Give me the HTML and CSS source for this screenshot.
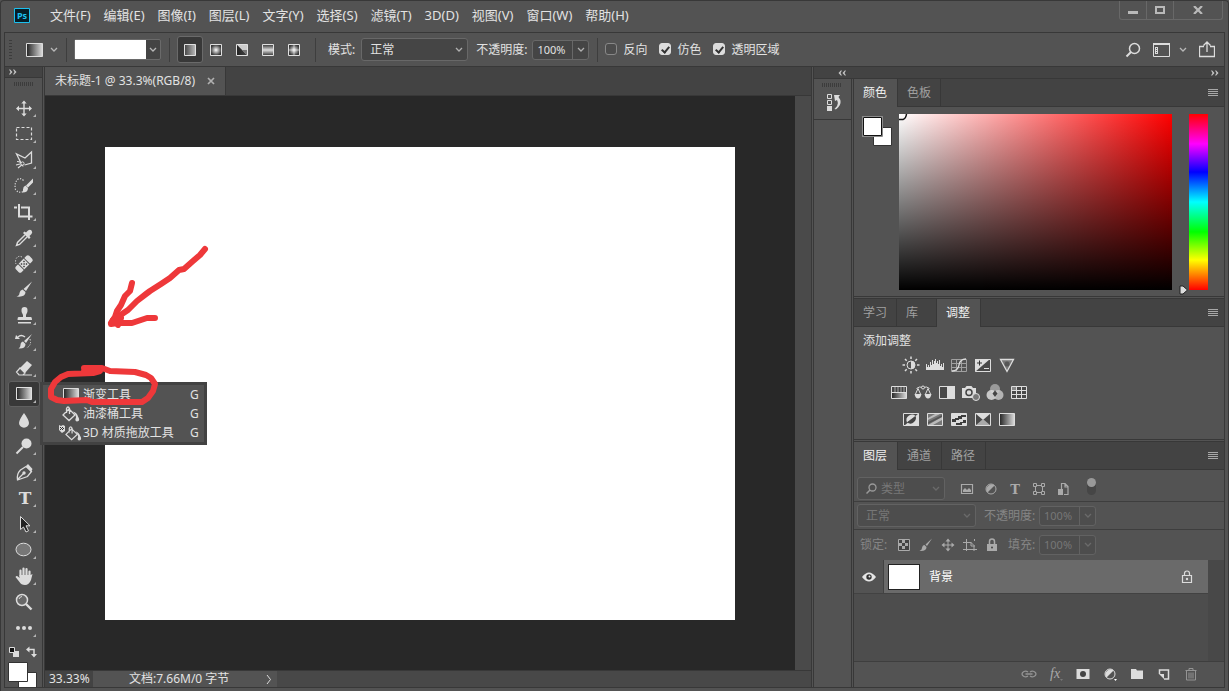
FILE: index.html
```html
<!DOCTYPE html>
<html lang="zh-CN">
<head>
<meta charset="utf-8">
<title>未标题-1 @ 33.3%(RGB/8)</title>
<link rel="stylesheet" href="styles.css">
</head>
<body>
<svg class="defs" width="0" height="0" aria-hidden="true">
  <defs>
    <linearGradient id="g-dark"><stop offset="0" stop-color="#222"/><stop offset="1" stop-color="#ddd"/></linearGradient>
    <linearGradient id="g-soft"><stop offset="0" stop-color="#444"/><stop offset="1" stop-color="#bbb"/></linearGradient>
    <radialGradient id="g-radial"><stop offset="0" stop-color="#fff"/><stop offset="1" stop-color="#3a3a3a"/></radialGradient>
    <linearGradient id="g-reflect" x2="0" y2="1"><stop offset="0" stop-color="#333"/><stop offset=".5" stop-color="#ddd"/><stop offset="1" stop-color="#333"/></linearGradient>
    <symbol id="chev" viewBox="0 0 8 6"><path d="M1 1l3 3 3-3" fill="none" stroke="currentColor" stroke-width="1.3"/></symbol>
    <symbol id="corner" viewBox="0 0 32 26"><path d="M28 19v3h-3z" fill="#b4b4b4"/></symbol>
    <symbol id="ff" viewBox="0 0 8 6"><path d="M0 .5h1.200l2.300 2.500-2.300 2.500H0L1.500 3zM4 .5h1.200L7.500 3 5.200 5.500H4L5.500 3z" fill="currentColor"/></symbol>
    <symbol id="bars" viewBox="0 0 10 8"><path d="M0 .5h10M0 2.500h10M0 4.500h10M0 6.500h10" stroke="#a8a8a8"/></symbol>
    <symbol id="bucket" viewBox="0 0 18 16"><path d="M1 9l6-6 6 6-6 5.500zM4.500 7V2.500Q6-.5 7.500 2.500V8" fill="none" stroke="#dcdcdc" stroke-width="1.300"/><path d="M11 5.500q4 1 5 5 2 3 .5 4.500-2 1-3-.5-.5-1 .5-3 0-3-3-6z" fill="#dcdcdc"/></symbol>
  </defs>
</svg>
<div class="app">
  <header class="menubar">
    <svg class="logo" viewBox="0 0 16 15"><path d="M.5.5h15v14H.5z" fill="#061e27" stroke="#1cc0ef"/><text x="3" y="11" font-size="9" fill="#1cc0ef">Ps</text></svg>
    <nav class="menus">
      <button>文件(F)</button><button>编辑(E)</button><button>图像(I)</button><button>图层(L)</button><button>文字(Y)</button><button>选择(S)</button><button>滤镜(T)</button><button>3D(D)</button><button>视图(V)</button><button>窗口(W)</button><button>帮助(H)</button>
    </nav>
    <div class="winbtns">
      <button aria-label="最小化"><svg width="12" height="10"><path d="M1 6h10v3H1z" fill="#b9b9b9"/></svg></button>
      <button aria-label="最大化"><svg width="10" height="8"><path d="M1 1h8v6H1z" fill="none" stroke="#b9b9b9" stroke-width="2"/></svg></button>
      <button class="wide" aria-label="关闭"><svg width="10" height="8"><path d="M1 0l8 8M9 0L1 8" stroke="#b9b9b9" stroke-width="2.200"/></svg></button>
    </div>
  </header>

  <div class="options">
    <span class="grip-v"></span>
    <button class="preset" aria-label="工具预设"><svg width="17" height="14"><path d="M.5.5h16v13H.5z" fill="url(#g-dark)" stroke="#dcdcdc"/></svg><svg class="chev" width="8" height="6"><use href="#chev"/></svg></button>
    <span class="sep"></span>
    <div class="gradpick"><span class="gradfill"></span><button aria-label="渐变列表"><svg width="8" height="6"><use href="#chev"/></svg></button></div>
    <span class="sep"></span>
    <div class="gradtypes">
      <button class="on" aria-label="线性渐变"><svg width="12" height="12"><path d="M.5.5h11v11H.5z" fill="url(#g-soft)" stroke="#e0e0e0"/></svg></button>
      <button aria-label="径向渐变"><svg width="12" height="12"><path d="M.5.5h11v11H.5z" fill="url(#g-radial)" stroke="#e0e0e0"/></svg></button>
      <button aria-label="角度渐变"><svg width="12" height="12"><path d="M.5.5h11v11H.5z" fill="url(#g-dark)"/><path d="M.5.5h11v11L6 6z" fill="#ccc"/><path d="M0 0l6 6 5.500 5.500H0z" fill="#222" opacity=".8"/><path d="M6 6l5.500 5.500V6z" fill="#777"/><path d="M.5.5h11v11H.5z" fill="none" stroke="#e0e0e0"/></svg></button>
      <button aria-label="对称渐变"><svg width="12" height="12"><path d="M.5.5h11v11H.5z" fill="url(#g-reflect)" stroke="#e0e0e0"/></svg></button>
      <button aria-label="菱形渐变"><svg width="12" height="12"><path d="M.5.5h11v11H.5z" fill="url(#g-radial)" stroke="#e0e0e0"/><path d="M6 1v10M1 6h10" stroke="#eee" opacity=".6"/></svg></button>
    </div>
    <span class="sep"></span>
    <label class="field-label" for="mode">模式:</label>
    <span class="select mode"><select id="mode"><option>正常</option></select><svg width="8" height="6"><use href="#chev"/></svg></span>
    <label class="field-label" for="opacity">不透明度:</label>
    <span class="num"><input id="opacity" type="text" value="100%"><button aria-label="不透明度滑块"><svg width="8" height="6"><use href="#chev"/></svg></button></span>
    <span class="sep"></span>
    <label class="check"><input type="checkbox">反向</label>
    <label class="check"><input type="checkbox" checked>仿色</label>
    <label class="check"><input type="checkbox" checked>透明区域</label>
    <div class="opt-right">
      <button aria-label="搜索"><svg width="16" height="16"><circle cx="9.500" cy="6.500" r="5" fill="none" stroke="#dcdcdc" stroke-width="1.500"/><path d="M6 10l-4.500 4.500" stroke="#dcdcdc" stroke-width="2"/></svg></button>
      <button class="layout" aria-label="工作区"><svg width="17" height="14"><path d="M.5 1h16v12.500H.5z" fill="none" stroke="#dcdcdc"/><path d="M0 1h17" stroke="#dcdcdc" stroke-width="2"/><path d="M2 4h3v7H2z" fill="#dcdcdc"/><path d="M3 5.500h1M3 7.500h1M3 9.500h1" stroke="#535353"/></svg><svg width="8" height="6"><use href="#chev"/></svg></button>
      <button aria-label="共享"><svg width="16" height="17"><path d="M5 5.500H.5v10h15v-10H11M8 11V1M4.500 4.500L8 1l3.500 3.500" fill="none" stroke="#dcdcdc" stroke-width="1.300"/></svg></button>
    </div>
  </div>

  <main class="work">
    <aside class="toolcol">
      <div class="colhead"><svg width="8" height="6"><use href="#ff"/></svg></div>
      <div class="toolbox">
        <span class="grip-h"></span>
        <button class="tool" aria-label="移动工具"><svg viewBox="0 0 32 26"><path d="M16 7v13M9.500 13.500h13" stroke="#dcdcdc" stroke-width="1.400"/><path d="M16 5.500l2.700 3h-5.400zM16 21.500l2.700-3h-5.400zM8 13.500l3-2.700v5.400zM24 13.500l-3-2.700v5.400z" fill="#dcdcdc"/><use href="#corner"/></svg></button>
        <button class="tool" aria-label="矩形选框工具"><svg viewBox="0 0 32 26"><path d="M8.500 6.500h15v12h-15z" fill="none" stroke="#dcdcdc" stroke-width="1.200" stroke-dasharray="3 2"/><use href="#corner"/></svg></button>
        <button class="tool" aria-label="多边形套索工具"><svg viewBox="0 0 32 26"><path d="M13 16L8.500 7l8.500 4 6.500-6v11l-7 2" fill="none" stroke="#dcdcdc" stroke-width="1.300"/><path d="M9 14.500q5 0 6 5m-7-1.500l6-1.500m-4 4.500l5-4" fill="none" stroke="#dcdcdc" stroke-width="1.200"/><circle cx="14.500" cy="16.500" r="1.600" fill="#535353" stroke="#dcdcdc"/><use href="#corner"/></svg></button>
        <button class="tool" aria-label="快速选择工具"><svg viewBox="0 0 32 26"><path d="M15.500 7.500q-3-3-6-1-3.500 4-2 10 3 4 7 2" fill="none" stroke="#dcdcdc" stroke-width="1.200" stroke-dasharray="1.200 1.500"/><path d="M25 5.500v4l-5 5-2-2zM17.500 12.500l2.500 2.500q0 5-6.500 4.500 2-1 1.500-3 0-3 2.500-4z" fill="#dcdcdc"/><use href="#corner"/></svg></button>
        <button class="tool" aria-label="裁剪工具"><svg viewBox="0 0 32 26"><path d="M11 5v12.500h13.500M6 8.500h3M13 8.500h8V21" fill="none" stroke="#dcdcdc" stroke-width="2"/><use href="#corner"/></svg></button>
        <button class="tool" aria-label="吸管工具"><svg viewBox="0 0 32 26"><path d="M17 10l-7.500 7.500-1 3 3-1L19 12" fill="none" stroke="#dcdcdc" stroke-width="1.400"/><path d="M15 8l1.500-1.500 1.500 1 2-2q2-1.500 3.500 0t0 3.500l-2 2 1 1.500L21 14z" fill="#dcdcdc"/><use href="#corner"/></svg></button>
        <button class="tool" aria-label="修复画笔工具"><svg viewBox="0 0 32 26"><path d="M14 6q-4-2-6 2-1 3 0 5" fill="none" stroke="#dcdcdc" stroke-dasharray="1.200 1.500"/><g transform="rotate(-45 16 13)"><rect x="6.500" y="9" width="19" height="8" rx="2" fill="#dcdcdc"/><path d="M12 8.500v9M20 8.500v9" stroke="#535353"/><path d="M13.500 10.500h1.500v1.500h-1.500zM17 10.500h1.500v1.500H17zM15.300 12.300h1.500v1.500h-1.500zM13.500 14h1.500v1.500h-1.500zM17 14h1.500v1.500H17z" fill="#444"/></g><use href="#corner"/></svg></button>
        <button class="tool" aria-label="画笔工具"><svg viewBox="0 0 32 26"><path d="M24 4.500L18 14l-2.500-2zM14.500 12.500l3 2.500q0 5.500-9 4.500 3-1 3-3.500.5-3 3-3.500z" fill="#dcdcdc"/><use href="#corner"/></svg></button>
        <button class="tool" aria-label="仿制图章工具"><svg viewBox="0 0 32 26"><path d="M15 12q-2-3-1.500-5a3 3 0 0 1 6 0q.500 2-1.500 5v2h5q1 0 1 3H9.500q0-3 1-3H15zM10 19h13v1.500H10z" fill="#dcdcdc"/><use href="#corner"/></svg></button>
        <button class="tool" aria-label="历史记录画笔工具"><svg viewBox="0 0 32 26"><path d="M24 5l-6 9-2-2zM15 12.500l2.500 2.500q0 5-7 4.500 2-1 2-3.500 0-3 2.500-3.500z" fill="#dcdcdc"/><path d="M17 8q-4-3-7 0" fill="none" stroke="#dcdcdc" stroke-width="1.500"/><path d="M7 10l1-4 4 4z" fill="#dcdcdc"/><path d="M22 10q2 7-4 9" fill="none" stroke="#dcdcdc" stroke-dasharray="1.200 1.500"/><use href="#corner"/></svg></button>
        <button class="tool" aria-label="橡皮擦工具"><svg viewBox="0 0 32 26"><path d="M12 13l7-7 5 4-7 8z" fill="#dcdcdc"/><path d="M12 13l5 5-2 2h-4l-2.500-3zM15 20h9" fill="none" stroke="#dcdcdc" stroke-width="1.200"/><use href="#corner"/></svg></button>
        <div class="tool-slot">
          <button class="tool on" aria-label="渐变工具"><svg viewBox="0 0 32 26"><path d="M8.500 6.500h15v12h-15z" fill="url(#g-dark)" stroke="#e0e0e0"/><use href="#corner"/></svg></button>
          <div class="flyout" role="menu">
            <button role="menuitem"><svg width="18" height="16"><path d="M1.500 1.500h15v12h-15z" fill="url(#g-dark)" stroke="#ddd"/></svg><span>渐变工具</span><kbd>G</kbd></button>
            <button role="menuitem"><svg width="18" height="16"><use href="#bucket"/></svg><span>油漆桶工具</span><kbd>G</kbd></button>
            <button role="menuitem"><svg class="mat" width="24" height="17"><path d="M1 1l2 1 2-1 2 1v5l-3 2-3-3z" fill="#dcdcdc"/><path d="M2 3h1v1H2zM4 3h1v1H4zM3 4h1v1H3zM5 4h1v1H5zM2 5h1v1H2zM4 5h1v1H4z" fill="#333"/><use href="#bucket" x="7" y="2" width="17" height="15"/></svg><span>3D 材质拖放工具</span><kbd>G</kbd></button>
          </div>
        </div>
        <button class="tool" aria-label="模糊工具"><svg viewBox="0 0 32 26"><path d="M16 6q5 7 5 10a5 4.700 0 0 1-10 0q0-3 5-10z" fill="#dcdcdc"/><use href="#corner"/></svg></button>
        <button class="tool" aria-label="减淡工具"><svg viewBox="0 0 32 26"><circle cx="18.500" cy="10.500" r="5" fill="#dcdcdc"/><path d="M15 14l-6.500 6.500" stroke="#dcdcdc" stroke-width="2"/><use href="#corner"/></svg></button>
        <button class="tool" aria-label="钢笔工具"><svg viewBox="0 0 32 26"><path d="M18 7.500l5.500 5-4 5-10 3.500q-1-6 3-10zM9.500 20.500l6-6" fill="none" stroke="#dcdcdc" stroke-width="1.300"/><path d="M18 7l2-2 4.500 5-1.500 3z" fill="#dcdcdc"/><circle cx="16" cy="14" r="1.700" fill="#dcdcdc"/><use href="#corner"/></svg></button>
        <button class="tool" aria-label="文字工具"><svg viewBox="0 0 32 26"><text class="slab" x="17" y="19" font-size="17" text-anchor="middle">T</text><use href="#corner"/></svg></button>
        <button class="tool" aria-label="路径选择工具"><svg viewBox="0 0 32 26"><path d="M12.500 5.500v13l3-2.500 2.500 5 2.500-1.200-2.500-5h4z" fill="#222" stroke="#dcdcdc"/><use href="#corner"/></svg></button>
        <button class="tool" aria-label="椭圆工具"><svg viewBox="0 0 32 26"><ellipse cx="15.500" cy="12.500" rx="7.500" ry="6.300" fill="#777" stroke="#dcdcdc"/><use href="#corner"/></svg></button>
        <button class="tool" aria-label="抓手工具"><svg viewBox="0 0 32 26"><path d="M12.500 13V7.500M15.500 12V5.500M18.500 12V6M21.500 13V8.500" stroke="#dcdcdc" stroke-width="2.200" stroke-linecap="round"/><path d="M11.500 12h11l2-1-1.500 6q-2 5-6 5-4 0-5.500-3L7.500 14q1-2 3 0l1 1z" fill="#dcdcdc"/><use href="#corner"/></svg></button>
        <button class="tool" aria-label="缩放工具"><svg viewBox="0 0 32 26"><circle cx="14" cy="11" r="5.500" fill="#686868" stroke="#dcdcdc" stroke-width="1.500"/><path d="M11 10q1-2.500 3-2.500" fill="none" stroke="#dcdcdc"/><path d="M18 15l5.500 5.500" stroke="#dcdcdc" stroke-width="2.400"/></svg></button>
        <button class="tool" aria-label="编辑工具栏"><svg viewBox="0 0 32 26"><circle cx="10" cy="13" r="2" fill="#dcdcdc"/><circle cx="16" cy="13" r="2" fill="#dcdcdc"/><circle cx="22" cy="13" r="2" fill="#dcdcdc"/><use href="#corner"/></svg></button>
        <div class="swatches"><svg viewBox="0 0 34 46" width="34" height="46"><path d="M5 10h6v6H5z" fill="#dcdcdc"/><path d="M1.500 6.500h5v5h-5z" fill="#111" stroke="#dcdcdc"/><path d="M21 8.500h5v5" fill="none" stroke="#dcdcdc" stroke-width="1.500"/><path d="M18 8.500l3.500-3v6zM23 13h6l-3 3.500z" fill="#dcdcdc"/><path d="M10.500 31.500h18v18h-18z" fill="#fff" stroke="#333"/><path d="M.5 21.500h19v19H.5z" fill="#fff" stroke="#333"/></svg></div>
      </div>
    </aside>

    <section class="doc">
      <div class="doctabs"><div class="doctab"><span>未标题-1 @ 33.3%(RGB/8)</span><button aria-label="关闭"><svg width="8" height="8"><path d="M1 1l6 6M7 1L1 7" stroke="#b0b0b0" stroke-width="1.700"/></svg></button></div></div>
      <div class="stage"><div class="board"><div class="artwork"></div></div><div class="scroll"></div></div>
      <footer class="status"><span class="zoomval">33.33%</span><span class="docinfo">文档:7.66M/0 字节<svg width="6" height="11"><path d="M1 1l3.500 4.500L1 10" fill="none" stroke="#dcdcdc"/></svg></span></footer>
    </section>

    <aside class="right">
      <div class="colhead split"><svg class="flip" width="8" height="6"><use href="#ff"/></svg><svg width="8" height="6"><use href="#ff"/></svg></div>
      <div class="rightbody">
        <div class="dock">
          <div class="dockgroup"><span class="grip-h"></span><button aria-label="历史记录"><svg width="17" height="18"><path d="M1.500 1.500h4v4h-4zM1.500 7.500h4v4h-4z" fill="none" stroke="#dcdcdc"/><path d="M1 13h5v5H1zM8 2h6l-1.500 2q5 6-2 12-1 .5-2 0 5-4 2.500-9L9 8z" fill="#dcdcdc"/></svg></button></div>
        </div>
        <div class="panels">
          <section class="panel">
            <div class="tabs"><button class="on">颜色</button><button>色板</button><svg class="menu" width="10" height="8"><use href="#bars"/></svg></div>
            <div class="color">
              <svg width="32" height="34"><path d="M11.500 11.500h18v18h-18z" fill="#fff" stroke="#333"/><path d="M.5.5h20v20H.5z" fill="#fff" stroke="#8c8c8c"/><path d="M1.500 1.500h18v18h-18z" fill="#fff" stroke="#111"/></svg>
              <div class="spectrum"><svg width="9" height="7"><path d="M0 5.500h4q3-1 3.500-5.500" fill="none" stroke="#111" stroke-width="1.500"/></svg></div>
              <div class="hue"><svg width="10" height="10"><path d="M1 1h3l4.500 4L4 9H1z" fill="#ddd" stroke="#222"/></svg></div>
            </div>
          </section>
          <section class="panel">
            <div class="tabs"><button>学习</button><button class="lib">库</button><button class="on">调整</button><svg class="menu" width="10" height="8"><use href="#bars"/></svg></div>
            <div class="adjust">
              <p>添加调整</p>
              <div class="adjrow mid">
                <button aria-label="亮度/对比度"><svg viewBox="0 0 18 18"><circle cx="9" cy="9" r="4" fill="none" stroke="#ddd"/><path d="M9 5a4 4 0 0 1 0 8z" fill="#ddd"/><path d="M9 .5v2.500M9 15v2.500M.5 9H3M15 9h2.500M3 3l1.700 1.700M13.300 13.300L15 15M15 3l-1.700 1.700M3 15l1.700-1.700" stroke="#ddd" stroke-width="1.500"/></svg></button>
                <button aria-label="色阶"><svg viewBox="0 0 18 18"><path d="M0 14V8h1v3h1V9h1v2h1V6h1v3h1V4h1v4h1V5h1V3h1v4h1V5h1v3h1V4h1v6h1V8h1v3h1V7h1v7z" fill="#ddd"/></svg></button>
                <button aria-label="曲线"><svg viewBox="0 0 18 18"><path d="M1.500 3.500h15v12h-15zM6.500 3v12M11.500 3v12M1 7.500h15M1 11.500h15" fill="none" stroke="#a0a0a0"/><path d="M2 15q6 0 7-6t7-6" fill="none" stroke="#ddd" stroke-width="1.300"/></svg></button>
                <button aria-label="曝光度"><svg viewBox="0 0 18 18"><path d="M1.500 3.500h15v12h-15z" fill="#484848" stroke="#ddd"/><path d="M1 16V3h15z" fill="#ddd"/><path d="M3 7h5M5.500 4.500v5" stroke="#333"/><path d="M10 12.500h5" stroke="#ddd"/></svg></button>
                <button aria-label="自然饱和度"><svg viewBox="0 0 18 18"><path d="M2.500 3.500h13l-6.500 12z" fill="#777" stroke="#ddd" stroke-width="1.300"/><circle cx="9" cy="8" r="2.500" fill="#555"/></svg></button>
              </div>
              <div class="adjrow">
                <button aria-label="色相/饱和度"><svg viewBox="0 0 18 18"><path d="M1.500 3.500h15v12h-15z" fill="url(#g-dark)" stroke="#ddd"/><path d="M2 4h14v5H2z" fill="#444"/><path d="M5 4v5M8 4v5M11 4v5M14 4v5" stroke="#aaa"/><path d="M1 9.500h16" stroke="#ddd"/></svg></button>
                <button aria-label="色彩平衡"><svg viewBox="0 0 18 18"><path d="M2.500 5.500Q5 3 9 4.500q4-1.500 6.500 1M4 5.500L1.500 11M4 5.500L6.500 11M14 5.500L11.500 11M14 5.500l2.500 5.500" fill="none" stroke="#ddd"/><circle cx="9" cy="4.500" r="1.500" fill="#535353" stroke="#ddd"/><path d="M.5 11h7q-1 4.500-3.500 4.500T.5 11zM10.500 11h7q-1 4.500-3.500 4.500t-3.500-4.500z" fill="#ddd"/></svg></button>
                <button aria-label="黑白"><svg viewBox="0 0 18 18"><path d="M1.500 3.500h15v12h-15z" fill="#484848" stroke="#ddd"/><path d="M9 3h8v13H9z" fill="#ddd"/></svg></button>
                <button aria-label="照片滤镜"><svg viewBox="0 0 18 18"><path d="M0 5h3l1.500-2h5L11 5h3v10H0z" fill="#ddd"/><circle cx="7" cy="9.500" r="3" fill="none" stroke="#444" stroke-width="1.500"/><circle cx="14" cy="14" r="3.500" fill="#777" stroke="#ddd"/></svg></button>
                <button aria-label="通道混合器"><svg viewBox="0 0 18 18"><circle cx="9" cy="6" r="5" fill="#999"/><circle cx="5.500" cy="12" r="5" fill="#ddd" opacity=".85"/><circle cx="12.500" cy="12" r="5" fill="#ccc" opacity=".8"/><path d="M9 7.500l2.500 3L9 14l-2.500-3.500z" fill="#444"/></svg></button>
                <button aria-label="颜色查找"><svg viewBox="0 0 18 18"><path d="M1.500 3.500h15v12h-15z" fill="#484848" stroke="#ddd"/><path d="M2 4h5v4H2z" fill="#888"/><path d="M6.500 3v13M11.500 3v13M1 7.500h15M1 11.500h15" stroke="#ddd"/></svg></button>
              </div>
              <div class="adjrow mid">
                <button aria-label="反相"><svg viewBox="0 0 18 18"><path d="M1.500 3.500h15v12h-15z" fill="#484848" stroke="#ddd"/><path d="M17 3v13H2z" fill="#ddd"/><path d="M5 12.500Q3 8 7 5.500q4-2 6.500.5z" fill="#ddd"/><path d="M5 12.500L13.500 6q1.500 3-1.500 6t-7 .5z" fill="#444"/></svg></button>
                <button aria-label="色调分离"><svg viewBox="0 0 18 18"><path d="M1.500 3.500h15v12h-15z" fill="#777"/><path d="M2 8l7-4h5L2 10zM2 15l14-8v3l-9 5z" fill="#bbb"/><path d="M2 12l14-7v2L2 14z" fill="#555"/><path d="M1.500 3.500h15v12h-15z" fill="none" stroke="#ddd"/></svg></button>
                <button aria-label="阈值"><svg viewBox="0 0 18 18"><path d="M1.500 3.500h15v12h-15z" fill="#ddd" stroke="#ddd"/><path d="M2 9h3V8h3V6h3V5h5v2h-4v2H9v1H6v2H2zM6 15v-2h4v-1h3v-2h3v3h-4v2z" fill="#3c3c3c"/></svg></button>
                <button aria-label="可选颜色"><svg viewBox="0 0 18 18"><path d="M1.500 3.500h15v12h-15z" fill="#484848"/><path d="M1.500 3.500h15L9 10z" fill="#ddd"/><path d="M1.500 15.500h15L9 9z" fill="#aaa"/><path d="M1.500 3.500h15v12h-15z" fill="none" stroke="#ddd"/></svg></button>
                <button aria-label="渐变映射"><svg viewBox="0 0 18 18"><path d="M1.500 3.500h15v12h-15z" fill="url(#g-dark)" stroke="#ddd"/></svg></button>
              </div>
            </div>
          </section>
          <section class="panel layers">
            <div class="tabs"><button class="on">图层</button><button>通道</button><button>路径</button><svg class="menu" width="10" height="8"><use href="#bars"/></svg></div>
            <div class="lrow filter">
              <span class="select kind"><select aria-label="图层过滤"><option>类型</option></select><svg class="mag" width="11" height="11"><circle cx="6.500" cy="4.500" r="3.500" fill="none" stroke="#999" stroke-width="1.300"/><path d="M4 7L.5 10.500" stroke="#999" stroke-width="1.500"/></svg><svg width="8" height="6"><use href="#chev"/></svg></span>
              <div class="ficons">
                <button aria-label="像素图层"><svg width="14" height="14"><path d="M1.500 2.500h11v9h-11z" fill="none" stroke="#aaa" stroke-width="1.200"/><path d="M3 10V8l2-2 2 2 2-2 2 2v2z" fill="#aaa"/></svg></button>
                <button aria-label="调整图层"><svg width="14" height="14"><circle cx="7" cy="7" r="5" fill="none" stroke="#aaa"/><path d="M10.500 3.500a5 5 0 0 0-7 7z" fill="#aaa"/></svg></button>
                <button aria-label="文字图层"><svg width="14" height="14"><text class="slab dim" x="7" y="12" font-size="13" text-anchor="middle">T</text></svg></button>
                <button aria-label="形状图层"><svg width="14" height="14"><path d="M3.500 3.500h7v7h-7z" fill="none" stroke="#aaa"/><path d="M1.500 1.500h3v3h-3zM9.500 1.500h3v3h-3zM1.500 9.500h3v3h-3zM9.500 9.500h3v3h-3z" fill="#535353" stroke="#aaa"/></svg></button>
                <button aria-label="智能对象"><svg width="14" height="14"><path d="M5.500 8V1.500h3.500l3 3v8H8M9 1v4h3" fill="none" stroke="#aaa" stroke-width="1.200"/><path d="M2 7h5v6H2z" fill="#aaa"/></svg></button>
              </div>
              <button class="toggle" aria-label="过滤开关"></button>
            </div>
            <div class="lrow blend">
              <span class="select blendsel"><select aria-label="混合模式"><option>正常</option></select><svg width="8" height="6"><use href="#chev"/></svg></span>
              <label class="field-label" for="lop">不透明度:</label>
              <span class="num"><input id="lop" type="text" value="100%"><button aria-label="图层不透明度"><svg width="8" height="6"><use href="#chev"/></svg></button></span>
            </div>
            <div class="lrow lock">
              <span class="locklabel">锁定:</span>
              <div class="licons">
                <button aria-label="锁定透明像素"><svg width="14" height="14"><path d="M1.500 1.500h11v11h-11z" fill="#444" stroke="#aaa"/><path d="M5 2h3v3H5zM2 5h3v3H2zM8 5h3v3H8zM5 8h3v3H5z" fill="#aaa"/></svg></button>
                <button aria-label="锁定图像像素"><svg width="14" height="14"><path d="M13 .5L8 8 6.500 6.500zM5.500 7l2 2q0 4.500-7 4 2.500-1 2.500-3 .5-3 2.500-3z" fill="#aaa"/></svg></button>
                <button aria-label="锁定位置"><svg width="14" height="14"><path d="M7 2v10M2 7h10" stroke="#aaa"/><path d="M7 .5L9.500 3.500h-5zM7 13.500L9.500 10.500h-5zM.5 7l3-2.500v5zM13.500 7l-3-2.500v5z" fill="#aaa"/></svg></button>
                <button aria-label="锁定画板"><svg width="14" height="14"><path d="M3.500 1v12M0 4.500h8l3 3V13M0 11.500h14M8 4v4h4M11.500 1v2" fill="none" stroke="#aaa"/></svg></button>
                <button aria-label="锁定全部"><svg width="14" height="14"><path d="M2 6h10v7H2z" fill="#aaa"/><path d="M4.500 6V3.500a2.500 2.500 0 0 1 5 0V6" fill="none" stroke="#aaa" stroke-width="1.500"/><circle cx="7" cy="9.500" r="1" fill="#444"/></svg></button>
              </div>
              <label class="field-label" for="lfill">填充:</label>
              <span class="num"><input id="lfill" type="text" value="100%"><button aria-label="填充不透明度"><svg width="8" height="6"><use href="#chev"/></svg></button></span>
            </div>
            <div class="llist">
              <div class="lscroll">
                <div class="layer">
                  <button class="eye" aria-label="可见性"><svg width="14" height="10"><path d="M0 5q7-9 14 0-7 9-14 0z" fill="#e6e6e6"/><circle cx="7" cy="5" r="2.700" fill="#333"/><circle cx="7.500" cy="4.500" r="1" fill="#e6e6e6"/></svg></button>
                  <div class="lbody"><span class="thumb"></span><span class="lname">背景</span><svg width="12" height="14"><path d="M1.500 5.500h9v7h-9zM3.500 5.500V3.500a2.500 2.500 0 0 1 5 0v2" fill="none" stroke="#dcdcdc" stroke-width="1.200"/><circle cx="6" cy="9" r="1.200" fill="#dcdcdc"/></svg></div>
                </div>
              </div>
            </div>
            <div class="lfoot">
              <button aria-label="链接图层"><svg width="16" height="14"><path d="M7 5Q5 3.500 3 4.500 1 5.500 1 7t2 2.500q2 1 4-.5M9 5q2-1.500 4-.5 2 1 2 2.500t-2 2.500q-2 1-4-.5M4.500 7h7" fill="none" stroke="#949494" stroke-width="1.300"/></svg></button>
              <button aria-label="图层样式"><svg width="16" height="14"><text class="fx" x="2" y="11" font-size="14">fx</text><path d="M12 12h3l-1.500 2z" fill="#777"/></svg></button>
              <button aria-label="添加蒙版"><svg width="16" height="14"><path d="M1.500 2h13v10h-13z" fill="#dcdcdc"/><circle cx="8" cy="7" r="3" fill="#444"/></svg></button>
              <button aria-label="新建调整图层"><svg width="16" height="14"><circle cx="8" cy="7" r="5" fill="none" stroke="#dcdcdc"/><path d="M11.500 3.500a5 5 0 0 0-7 7z" fill="#dcdcdc"/><path d="M12 12h3l-1.500 2z" fill="#fff"/></svg></button>
              <button aria-label="新建组"><svg width="16" height="14"><path d="M2 2h5l1 1.500h6V12H2z" fill="#dcdcdc"/></svg></button>
              <button aria-label="新建图层"><svg width="16" height="14"><path d="M3.500 7V3h9v9H8" fill="none" stroke="#dcdcdc" stroke-width="1.500"/><path d="M3 7h5v5z" fill="#dcdcdc"/></svg></button>
              <button aria-label="删除图层"><svg width="16" height="14"><path d="M2.500 3.500h11M6 3V1.500h4V3M3.500 4v9h9V4M6 5.500v6M8 5.500v6M10 5.500v6" fill="none" stroke="#949494"/></svg></button>
            </div>
          </section>
        </div>
      </div>
    </aside>
  </main>
  <svg class="marks" width="260" height="420" fill="none" stroke="#ee383a" stroke-width="6" stroke-linecap="round" stroke-linejoin="round" aria-hidden="true">
    <path d="M205 249l-5 6-7 6-9 8-5 1-9 8-9 6-11 7-4 3-9 7-9 9-15 10"/>
    <path d="M132 283l-2 8-5 5-4 9-4 6-2 6-4 6"/>
    <path d="M155 318h-8l-9 3-6 2h-14l-7 1 6-8 4 2-3 7"/>
    <path d="M84 371h16l-7 2-25 1-7 3-6 5-4 7v8l6 3 7 1 23-1 5 2h50l6-4 5-7 2-7-4-6-5-3-11-3-25-1-8-3H84"/>
  </svg>
</div>
</body>
</html>
```

FILE: styles.css
```css
* { box-sizing: border-box; }
body { margin: 0; background: #535353; font: 12px/16px "Noto Sans", "Noto Sans CJK SC", sans-serif; color: #e2e2e2; }
button, input, select { font: inherit; color: inherit; background: none; border: 0; padding: 0; margin: 0; border-radius: 0; }
svg { display: block; flex: none; }
button { display: flex; align-items: center; justify-content: center; }
.defs { position: absolute; }
.slab { font-family: "DejaVu Serif", serif; font-weight: bold; fill: #dcdcdc; }
.slab.dim { fill: #aaa; }
.fx { font-family: "Liberation Serif", serif; font-style: italic; fill: #aaa; }

.app { position: relative; display: flex; flex-direction: column; height: 100vh; padding: 0 3px 3px; border: 1px solid #383838; border-bottom: 0; border-radius: 4px 4px 0 0; background: #535353; overflow: hidden; }

.menubar { display: flex; align-items: center; height: 31px; font-size: 13px; line-height: 18px; }
.logo { width: 16px; height: 15px; margin: 0 14px 3px 10px; font-weight: bold; }
.menus { display: flex; gap: 13px; flex: 1; margin: 0 0 3px 6px; }
.winbtns { display: flex; align-self: flex-start; height: 19px; margin-right: 2px; border: 1px solid #686868; border-top: 0; border-radius: 0 0 3px 3px; }
.winbtns button { width: 27px; border-right: 1px solid #686868; }
.winbtns .wide { width: 48px; border-right: 0; }

.options { display: flex; align-items: center; height: 35px; border: 1px solid #383838; }
.grip-v { width: 3px; height: 20px; margin: 0 14px 0 4px; background: repeating-linear-gradient(#3c3c3c 0 1px, transparent 1px 3px); }
.preset { gap: 7px; }
.options button { color: #b8b8b8; }
.sep { width: 1px; height: 24px; background: #3e3e3e; margin: 0 7px 0 8px; }
.gradpick { display: flex; width: 87px; height: 21px; border: 1px solid #6a6a6a; background: #444; border-radius: 2px; }
.gradfill { flex: 1; background: #fff; }
.gradpick button { width: 14px; }
.gradtypes { display: flex; }
.gradtypes button { width: 26px; height: 27px; border-radius: 3px; }
.gradtypes .on { background: #383838; border: 1px solid #6a6a6a; }
.field-label { white-space: nowrap; }
.select { display: grid; grid-template-columns: 1fr 8px 4px; align-items: center; height: 23px; border: 1px solid #686868; border-radius: 3px; background: #454545; }
.select select { grid-area: 1 / 1 / 2 / 4; appearance: none; height: 21px; padding-left: 8px; width: 100%; outline: 0; }
.select > svg { grid-area: 1 / 2; pointer-events: none; color: #b0b0b0; }
.mode { width: 107px; margin: 0 8px 0 6px; }
.options .field-label:first-of-type { margin-left: 5px; }
.num { display: flex; width: 57px; height: 20px; border: 1px solid #686868; border-radius: 3px; background: #454545; }
.num input { flex: 1; min-width: 0; padding-left: 4px; outline: 0; font-size: 11px; }
.num button { width: 16px; border-left: 1px solid #686868; color: #b0b0b0; }
.options .num { margin-left: 5px; }
.check { display: flex; align-items: center; gap: 6px; margin-right: 12px; white-space: nowrap; }
.check input { appearance: none; width: 12px; height: 12px; border: 1px solid #888; border-radius: 3px; background: #4c4c4c; display: grid; place-items: center; margin-bottom: 2px; }
.check input:checked { background: #dcdcdc; border-color: #dcdcdc; }
.check input:checked::after { content: ""; width: 3px; height: 6px; border: solid #333; border-width: 0 2px 2px 0; transform: rotate(40deg); }
.opt-right { display: flex; gap: 12px; margin: 0 9px 0 auto; }
.opt-right .layout { gap: 9px; }

.work { flex: 1; min-height: 0; display: flex; gap: 1px; border-bottom: 1px solid #383838; }
.colhead { display: flex; align-items: center; height: 12px; padding: 0 4px; background: #434343; border-bottom: 1px solid #383838; color: #c4c4c4; }
.split { justify-content: space-between; padding: 0 5px 0 24px; }
.flip { transform: scaleX(-1); }
.grip-h { display: block; width: 20px; height: 4px; background: repeating-linear-gradient(90deg, #3c3c3c 0 1px, transparent 1px 2px); }

.toolcol { display: flex; flex-direction: column; width: 39px; border: solid #383838; border-width: 0 1px; }
.toolbox { display: flex; flex-direction: column; flex: 1; padding: 4px 3px 0; }
.toolbox .grip-h { margin: 0 6px 9px; }
.tool { width: 32px; height: 26px; }
.tool svg { width: 32px; height: 26px; }
.tool.on { background: #383838; border-radius: 3px; box-shadow: inset 0 0 0 1px #606060; }
.tool-slot { position: relative; }
.flyout { position: absolute; z-index: 5; left: 32px; top: 1px; width: 167px; background: #535353; border: 3px solid #424242; }
.flyout button { width: 100%; height: 19px; text-align: left; }
.flyout svg { margin-left: 19px; }
.flyout .mat { margin-left: 15px; margin-right: -2px; }
.flyout span { flex: 1; margin-left: 3px; white-space: nowrap; }
.flyout kbd { font: inherit; width: 14px; }
.swatches { height: 46px; overflow: hidden; }

.doc { flex: 1; min-width: 0; display: flex; flex-direction: column; border: solid #383838; border-width: 0 1px; }
.doctabs { display: flex; height: 29px; background: #434343; border-bottom: 1px solid #383838; }
.doctab { display: flex; align-items: center; gap: 12px; padding: 0 10px; background: #535353; border-right: 1px solid #383838; white-space: nowrap; }
.stage { flex: 1; min-height: 0; display: flex; }
.board { flex: 1; display: flex; align-items: center; justify-content: center; background: #282828; }
.artwork { width: 84%; aspect-ratio: 630 / 473; background: #fff; }
.scroll { width: 16px; background: #4a4a4a; }
.status { display: flex; height: 17px; background: #484848; border-top: 1px solid #383838; }
.zoomval { width: 48px; padding-left: 4px; background: #434343; }
.docinfo { display: flex; align-items: center; justify-content: space-between; width: 184px; padding: 0 5px 0 36px; background: #535353; }

.right { display: flex; flex-direction: column; width: 412px; border: solid #383838; border-width: 0 1px; }
.rightbody { flex: 1; min-height: 0; display: flex; gap: 1px; }
.dock { width: 38px; border-right: 1px solid #383838; }
.dockgroup { padding: 4px 8px 7px; border-bottom: 1px solid #383838; }
.dockgroup button { margin: 6px 0 1px 4px; }
.panels { flex: 1; display: flex; flex-direction: column; gap: 1px; border-left: 1px solid #383838; }
.panel { border-bottom: 1px solid #383838; }
.panel + .panel { border-top: 1px solid #383838; }
.tabs { display: flex; height: 28px; background: #434343; box-shadow: inset 0 -1px #383838; color: #a0a0a0; }
.tabs button { padding: 0 9px; border-right: 1px solid #383838; }
.tabs .on { background: #535353; color: #f0f0f0; padding: 0 10px 0 9px; }
.tabs .lib { width: 40px; padding-right: 18px; }
.tabs .menu { margin: 10px 6px 0 auto; }
.color { display: flex; height: 189px; padding: 7px 16px 6px 8px; }
.color > svg { margin: 2px 5px 0 0; }
.spectrum { flex: 1; background: linear-gradient(transparent, #000), linear-gradient(90deg, #fff, #f00); }
.hue { position: relative; width: 19px; margin-left: 17px; background: linear-gradient(#f00, #f0f 17%, #00f 33%, #0ff 50%, #0f0 67%, #ff0 83%, #f00); }
.hue svg { position: absolute; left: -10px; bottom: -5px; }
.adjust { height: 112px; padding: 6px 9px; }
.adjust p { margin: 0 0 2px; }
.adjrow { display: flex; height: 27px; padding-left: 24px; }
.adjrow.mid { padding-left: 36px; }
.adjrow button { width: 24px; height: 27px; }
.adjrow svg { width: 18px; height: 18px; }

.layers { flex: 1; min-height: 0; display: flex; flex-direction: column; border-bottom: 0; }
.layers .tabs { flex: none; }
.layers .tabs button { padding: 0 10px 0 9px; }
.lrow { display: flex; align-items: center; padding-left: 3px; border-bottom: 1px solid #3e3e3e; color: #858585; }
.layers .select, .layers .num { background: #4d4d4d; border-color: #626262; color: #777; }
.layers .select > svg, .layers .num button { color: #6a6a6a; border-color: #626262; }
.filter { height: 32px; padding-top: 6px; }
.kind { width: 88px; }
.kind select { padding-left: 23px; }
.kind .mag { grid-area: 1 / 1; margin-left: 8px; }
.ficons { display: flex; margin-left: 10px; }
.ficons button { width: 24px; height: 18px; }
.toggle { width: 9px; height: 17px; margin-left: 12px; margin-bottom: 5px; border-radius: 5px; background: #464646; align-items: flex-start; }
.toggle::before { content: ""; width: 9px; height: 9px; border-radius: 50%; background: #999; }
.blend { height: 28px; }
.blendsel { width: 119px; margin-right: 8px; }
.lrow .num { margin-left: auto; margin-right: 128px; }
.lock { height: 30px; border-bottom: 0; padding-bottom: 1px; }
.locklabel { width: 32px; padding-left: 3px; white-space: nowrap; }
.licons { display: flex; margin: 0 5px 0 4px; }
.licons button { width: 22px; height: 18px; }
.llist { flex: 1; min-height: 0; display: flex; padding-right: 16px; background: #484848; }
.lscroll { flex: 1; background: #4d4d4d; }
.layer { display: flex; height: 34px; border-bottom: 1px solid #424242; }
.eye { width: 30px; background: #535353; border-right: 1px solid #424242; }
.lbody { flex: 1; display: flex; align-items: center; padding: 0 15px 0 4px; background: #6a6a6a; color: #fff; }
.thumb { width: 32px; height: 26px; background: #fff; border: 1px solid #222; }
.lname { flex: 1; margin-left: 9px; }
.lfoot { display: flex; align-items: center; justify-content: flex-end; height: 26px; padding: 0 20px 2px 0; border-top: 1px solid #3e3e3e; }
.lfoot button { width: 27px; }

.marks { position: absolute; z-index: 10; left: -1px; top: -1px; pointer-events: none; }
```
